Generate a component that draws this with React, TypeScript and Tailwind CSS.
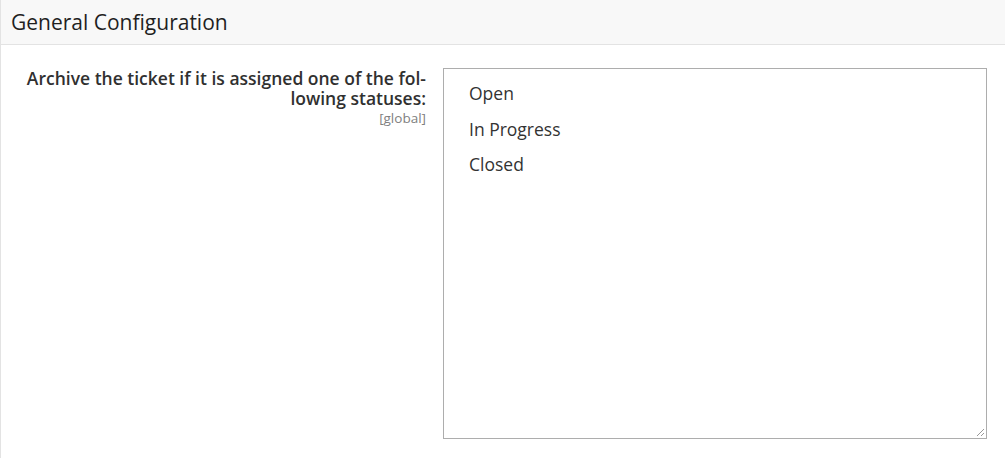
const statuses = ["Open", "In Progress", "Closed"];

export default function App() {
  return (
    <div className="min-h-[458px] border-l border-[#e3e3e3] bg-white font-['Open_Sans',sans-serif] text-[#303030]">
      <div className="h-[45px] border-b border-[#e3e3e3] bg-[#f8f8f8] pl-[10px] pt-[8px] text-[21px] leading-[28px] text-[#1f1f1f]">
        General Configuration
      </div>

      <div className="flex pt-[23px] pr-[18px]">
        <div className="w-[425px] shrink-0 text-right">
          <div className="text-[17.5px] font-semibold leading-[20px] text-[#303030]">
            <div>Archive the ticket if it is assigned one of the fol-</div>
            <div>lowing statuses:</div>
          </div>
          <div className="mt-[1px] text-[13.5px] leading-[18px] text-[#808080]">[global]</div>
        </div>

        <div className="relative ml-[17px] h-[371px] flex-1 border border-[#adadad] bg-white pl-[25px] pt-[11px]">
          {statuses.map((s) => (
            <div key={s} className="h-[35.5px] text-[17.5px] leading-[26px] text-[#333]">
              {s}
            </div>
          ))}
          <svg className="absolute bottom-[1px] right-[1px]" width="10" height="10" viewBox="0 0 10 10">
            <path d="M9 2 L2 9 M9 6 L6 9" stroke="#999" strokeWidth="1" />
          </svg>
        </div>
      </div>
    </div>
  );
}
